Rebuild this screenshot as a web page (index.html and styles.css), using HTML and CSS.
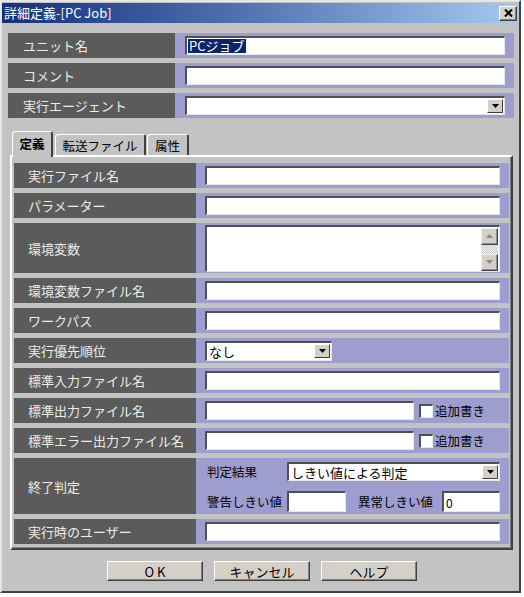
FILE: index.html
```html
<!DOCTYPE html>
<html lang="ja">
<head>
<meta charset="utf-8">
<title>詳細定義-[PC Job]</title>
<link rel="stylesheet" href="styles.css">
</head>
<body>
<div class="window">
  <div class="titlebar">
    <span class="title">詳細定義-[PC Job]</span>
    <span class="close"><svg width="9" height="8" viewBox="0 0 9 8"><path d="M1 0.5 L8 7.5 M8 0.5 L1 7.5" stroke="#000" stroke-width="2" fill="none"/></svg></span>
  </div>

  <div class="top-rows">
    <div class="row">
      <div class="label">ユニット名</div>
      <div class="field"><div class="input"><span class="selected">PCジョブ</span></div></div>
    </div>
    <div class="row">
      <div class="label">コメント</div>
      <div class="field"><div class="input"></div></div>
    </div>
    <div class="row">
      <div class="label">実行エージェント</div>
      <div class="field"><div class="input select-full"><span class="arrow"><svg width="7" height="4" viewBox="0 0 7 4"><polygon points="0,0 7,0 3.5,4" fill="#000"/></svg></span></div></div>
    </div>
  </div>

  <div class="tabs">
    <div class="tab active">定義</div>
    <div class="tab t2">転送ファイル</div>
    <div class="tab t3">属性</div>
  </div>

  <div class="panel">
    <div class="row prow">
      <div class="label">実行ファイル名</div>
      <div class="field"><div class="input"></div></div>
    </div>
    <div class="row prow">
      <div class="label">パラメーター</div>
      <div class="field"><div class="input"></div></div>
    </div>
    <div class="row prow tall">
      <div class="label">環境変数</div>
      <div class="field">
        <div class="input textarea">
          <div class="scroll">
            <span class="sbtn"><svg width="7" height="4" viewBox="0 0 7 4"><polygon points="3.5,0 7,4 0,4" fill="#8a8a8a"/></svg></span>
            <span class="sbtn"><svg width="7" height="4" viewBox="0 0 7 4"><polygon points="0,0 7,0 3.5,4" fill="#8a8a8a"/></svg></span>
          </div>
        </div>
      </div>
    </div>
    <div class="row prow">
      <div class="label">環境変数ファイル名</div>
      <div class="field"><div class="input"></div></div>
    </div>
    <div class="row prow">
      <div class="label">ワークパス</div>
      <div class="field"><div class="input"></div></div>
    </div>
    <div class="row prow">
      <div class="label">実行優先順位</div>
      <div class="field">
        <div class="input select-short"><span class="val">なし</span><span class="arrow"><svg width="7" height="4" viewBox="0 0 7 4"><polygon points="0,0 7,0 3.5,4" fill="#000"/></svg></span></div>
      </div>
    </div>
    <div class="row prow">
      <div class="label">標準入力ファイル名</div>
      <div class="field"><div class="input"></div></div>
    </div>
    <div class="row prow">
      <div class="label">標準出力ファイル名</div>
      <div class="field">
        <div class="input input-mid"></div>
        <span class="check"></span><span class="ftext addl">追加書き</span>
      </div>
    </div>
    <div class="row prow">
      <div class="label">標準エラー出力ファイル名</div>
      <div class="field">
        <div class="input input-mid"></div>
        <span class="check"></span><span class="ftext addl">追加書き</span>
      </div>
    </div>
    <div class="row prow judge">
      <div class="label">終了判定</div>
      <div class="field field-col">
        <div class="line">
          <span class="ftext jl">判定結果</span>
          <div class="input select-judge"><span class="val">しきい値による判定</span><span class="arrow"><svg width="7" height="4" viewBox="0 0 7 4"><polygon points="0,0 7,0 3.5,4" fill="#000"/></svg></span></div>
        </div>
        <div class="line">
          <span class="ftext jl">警告しきい値</span>
          <div class="input small warn"></div>
          <span class="ftext jl2">異常しきい値</span>
          <div class="input small err"><span class="val num">0</span></div>
        </div>
      </div>
    </div>
    <div class="row prow">
      <div class="label">実行時のユーザー</div>
      <div class="field"><div class="input"></div></div>
    </div>
  </div>

  <div class="buttons">
    <div class="btn ok">OK</div>
    <div class="btn">キャンセル</div>
    <div class="btn">ヘルプ</div>
  </div>
</div>
</body>
</html>
```

FILE: styles.css
```css
* { box-sizing: border-box; }

body {
  margin: 0;
  background: #ffffff;
  font-family: "Noto Sans CJK JP", "Noto Sans", sans-serif;
  font-size: 13px;
  color: #000;
}

.window {
  width: 521px;
  height: 593px;
  background: #c3c3c3;
  border: 2px solid;
  border-color: #e6e6e6 #404040 #404040 #e6e6e6;
  display: flex;
  flex-direction: column;
}

.titlebar {
  margin-top: 1px;
  height: 20px;
  background: linear-gradient(to right, #14307a, #4e70b0 45%, #a6caf0);
  display: flex;
  align-items: center;
  justify-content: space-between;
  padding: 0 2px;
  color: #fff;
}

.title {
  font-size: 13px;
  line-height: 20px;
}

.close {
  width: 18px;
  height: 15px;
  background: #d4d0c8;
  border: 1px solid;
  border-color: #ffffff #404040 #404040 #ffffff;
  box-shadow: inset -1px -1px #808080;
  display: flex;
  align-items: center;
  justify-content: center;
}

.top-rows {
  margin: 10px 5px 0 6px;
  display: flex;
  flex-direction: column;
  gap: 5px;
}

.row {
  display: grid;
  grid-template-columns: 167px 1fr;
  height: 25px;
}

.label {
  background: #5b5b5b;
  color: #ececec;
  display: flex;
  align-items: center;
  padding-left: 15px;
  font-size: 13px;
  white-space: nowrap;
}

.field {
  background: #9d9dcf;
  display: flex;
  align-items: center;
  padding: 0 9px 0 10px;
}

.input {
  flex: 1;
  height: 19px;
  background: #fff;
  border-style: solid;
  border-width: 2px 1px 1px 2px;
  border-color: #505050 #e8e8e8 #e8e8e8 #505050;
  display: flex;
  align-items: center;
}

.selected {
  margin-left: 1px;
  background: #0a246a;
  color: #fff;
  font-size: 13px;
  line-height: 14px;
  padding: 0 1px;
}

.select-full {
  justify-content: flex-end;
}

.arrow {
  width: 16px;
  height: 14px;
  margin-right: 1px;
  background: #d4d0c8;
  border: 1px solid;
  border-color: #ffffff #404040 #404040 #ffffff;
  display: flex;
  align-items: center;
  justify-content: center;
}

.val {
  margin-left: 2px;
  font-size: 13px;
}

.num {
  font-size: 12px;
}

/* tabs */
.tabs {
  margin: 13px 0 0 10px;
  height: 24px;
  display: flex;
  align-items: flex-end;
  position: relative;
  z-index: 1;
}

.tab {
  height: 21px;
  background: #c3c3c3;
  border-style: solid;
  border-width: 1px 2px 0 1px;
  border-color: #ffffff #404040 #404040 #ffffff;
  border-radius: 3px 3px 0 0;
  font-size: 12.5px;
  display: flex;
  align-items: center;
  justify-content: center;
}

.tab.active {
  width: 41px;
  height: 26px;
  margin-bottom: -2px;
  font-weight: bold;
  padding-bottom: 2px;
}

.tab.t2 {
  width: 91px;
  margin-left: 2px;
}

.tab.t3 {
  width: 42px;
  margin-left: 1px;
}

/* panel */
.panel {
  margin: 0 6px 0 8px;
  border: 2px solid;
  border-color: #ffffff #404040 #404040 #ffffff;
  box-shadow: inset -1px -1px #808080;
  padding: 6px 2px 4px 2px;
  display: flex;
  flex-direction: column;
  gap: 5px;
}

.prow {
  grid-template-columns: 182px 1fr;
}

.prow .label {
  padding-left: 14px;
}

.prow .field {
  padding: 0 9px;
}

.tall {
  height: 50px;
}

.textarea {
  height: 47px;
  justify-content: flex-end;
  align-items: stretch;
}

.scroll {
  width: 17px;
  margin: 1px 1px 0 0;
  display: flex;
  flex-direction: column;
  justify-content: space-between;
  background: repeating-conic-gradient(#c8c8c8 0 25%, #f4f4f4 0 50%) 0 0 / 2px 2px;
}

.sbtn {
  height: 17px;
  background: #d4d0c8;
  border: 1px solid;
  border-color: #f0f0f0 #404040 #404040 #f0f0f0;
  box-shadow: inset -1px -1px #909090;
  display: flex;
  align-items: center;
  justify-content: center;
}

.select-short {
  flex: none;
  width: 127px;
  height: 20px;
  justify-content: space-between;
}

.input-mid {
  flex: none;
  width: 209px;
}

.check {
  width: 14px;
  height: 14px;
  margin-left: 5px;
  background: #fff;
  border-style: solid;
  border-width: 2px 1px 1px 2px;
  border-color: #505050 #e8e8e8 #e8e8e8 #505050;
}

.ftext {
  font-size: 12.5px;
  color: #000;
  white-space: nowrap;
}

.addl {
  margin-left: 2px;
}

.judge {
  height: 56px;
}

.field-col {
  flex-direction: column;
  align-items: stretch;
  justify-content: flex-start;
  padding: 4px 9px 0 11px;
  gap: 10px;
}

.prow .field-col {
  padding: 4px 9px 0 11px;
}

.line {
  display: flex;
  align-items: center;
}

.jl {
  width: 80px;
}

.select-judge {
  height: 19px;
  justify-content: space-between;
}

.small {
  height: 21px;
}

.warn {
  flex: none;
  width: 59px;
}

.jl2 {
  width: 78px;
  margin: 0 6px 0 12px;
}

/* buttons */
.buttons {
  margin-top: 11px;
  padding-left: 3px;
  display: flex;
  justify-content: center;
  gap: 11px;
}

.btn {
  width: 96px;
  height: 20px;
  background: #d4d0c8;
  border: 1px solid;
  border-color: #ffffff #404040 #404040 #ffffff;
  box-shadow: inset -1px -1px #808080;
  font-size: 13px;
  display: flex;
  align-items: center;
  justify-content: center;
}

.ok {
  letter-spacing: 3px;
  padding-left: 3px;
}
```
